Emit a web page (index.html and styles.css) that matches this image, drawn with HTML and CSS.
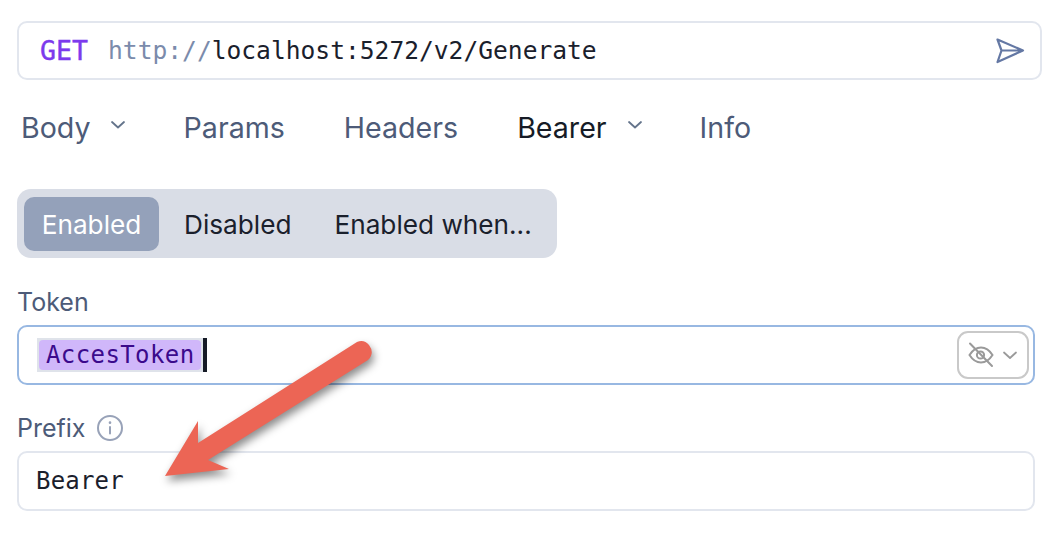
FILE: index.html

```html
<!DOCTYPE html>
<html lang="en">
<head>
    <meta charset="UTF-8">
    <title>Bearer auth</title>
    <link rel="stylesheet" href="styles.css">
</head>
<body>

    <div id="request">
        <div class="url-bar">
            <span class="method">GET</span>
            <span class="url"><span class="scheme">http://</span>localhost:5272/v2/Generate</span>
            <svg class="send-icon" width="30" height="30" viewBox="0 0 30 30" fill="none" stroke="#6478a4" stroke-width="2.2" stroke-linejoin="round" stroke-linecap="round">
                <path d="M2.5 3.5 L28 14.5 L2.5 26 L6.5 14.5 Z M6.5 14.5 H28"/>
            </svg>
        </div>

        <nav class="tabs">
            <span class="tab tab-body">Body
                <svg class="chev" width="18" height="18" viewBox="0 0 18 18" fill="none" stroke="#64748b" stroke-width="1.8" stroke-linecap="round" stroke-linejoin="round"><path d="M3 6 L9 11.5 L15 6"/></svg>
            </span>
            <span class="tab">Params</span>
            <span class="tab">Headers</span>
            <span class="tab tab-active">Bearer
                <svg class="chev" width="18" height="18" viewBox="0 0 18 18" fill="none" stroke="#64748b" stroke-width="1.8" stroke-linecap="round" stroke-linejoin="round"><path d="M3 6 L9 11.5 L15 6"/></svg>
            </span>
            <span class="tab">Info</span>
        </nav>

        <div class="segmented">
            <span class="seg seg-on">Enabled</span>
            <span class="seg">Disabled</span>
            <span class="seg">Enabled when...</span>
        </div>

        <div class="fields">
            <label class="field-label">Token</label>
            <div class="input input-focus">
                <span class="selection"><span class="var-chip">AccesToken</span></span><span class="caret"></span>
                <span class="visibility">
                    <svg width="28" height="28" viewBox="0 0 28 28" fill="none" stroke="#9a9a9a" stroke-width="2" stroke-linecap="round">
                        <path d="M2.5 14 C6 8.5 10 6.5 14 6.5 C18 6.5 22 8.5 25.5 14 C22 19.5 18 21.5 14 21.5 C10 21.5 6 19.5 2.5 14 Z"/>
                        <circle cx="13.5" cy="14" r="3.6"/>
                        <path d="M3 2.5 L25 25"/>
                    </svg>
                    <svg width="18" height="18" viewBox="0 0 18 18" fill="none" stroke="#9a9a9a" stroke-width="1.8" stroke-linecap="round" stroke-linejoin="round"><path d="M3 6.5 L9 12 L15 6.5"/></svg>
                </span>
            </div>

            <label class="field-label label-prefix">Prefix
                <svg width="28" height="28" viewBox="0 0 28 28" fill="none" stroke="#98a2b8" stroke-width="2" stroke-linecap="round">
                    <circle cx="14" cy="14" r="12"/>
                    <path d="M14 13 V19.5"/>
                    <path d="M14 8.6 V8.8" stroke-width="2.6"/>
                </svg>
            </label>
            <div class="input">
                <span class="value">Bearer</span>
            </div>
        </div>
    </div>

    <!-- annotation arrow on top of the screenshot -->
    <svg class="arrow" width="1064" height="540" viewBox="0 0 1064 540">
        <path class="arrow-shadow" d="M357 342 Q364 339 369 345 Q375 353 368 360 L208 460 L229 469 L165 476 L198 421 L198 443 Z"/>
        <path class="arrow-head" d="M357 342 Q364 339 369 345 Q375 353 368 360 L208 460 L229 469 L165 476 L198 421 L198 443 Z"/>
    </svg>

</body>
</html>
```

FILE: styles.css

```css
body {
    margin: 0;
    padding: 0;
    width: 1064px;
    height: 540px;
    overflow: hidden;
    background-color: #fff;
    font-family: 'Inter', sans-serif;
    color: #4d5b78;
    position: relative;
}

#request {
    padding: 21px 22px 0 17px;
}

.url-bar {
    display: flex;
    align-items: center;
    height: 59px;
    box-sizing: border-box;
    padding: 0 15px 0 21px;
    border: 2px solid #e2e6ee;
    border-radius: 10px;
    font-family: 'DejaVu Sans Mono', monospace;
    font-size: 24.6px;
}

.method {
    color: #7c3aed;
    font-size: 26.6px;
    -webkit-text-stroke: 0.4px #7c3aed;
    margin-right: 20px;
}

.url {
    flex: 1;
    color: #1a202c;
}

.scheme {
    color: #7b8bab;
}

.tabs {
    display: flex;
    align-items: center;
    margin-top: 28px;
    padding-left: 4px;
    font-size: 28.6px;
    line-height: 40px;
    gap: 59px;
}

.tab {
    display: flex;
    align-items: center;
}

.tab-active {
    color: #161b26;
}

.chev {
    margin-left: 18px;
    margin-right: -2px;
    margin-top: -6px;
}

.tab-active .chev {
    margin-left: 19px;
    margin-right: -3px;
}

.segmented {
    display: flex;
    margin-top: 41px;
    padding: 8px 7px 7px;
    height: 69px;
    width: 540px;
    box-sizing: border-box;
    background-color: #d9dde6;
    border-radius: 14px;
    font-size: 26.2px;
    color: #1a202c;
    white-space: nowrap;
}

.seg {
    display: flex;
    align-items: center;
    flex-shrink: 0;
    padding: 0 18px 0 25px;
}

.seg-on {
    background-color: #94a1ba;
    color: #fff;
    border-radius: 10px;
    width: 135px;
    box-sizing: border-box;
    justify-content: center;
    padding: 0;
}

.fields {
    width: 1018px;
}

.field-label {
    display: block;
    font-size: 25px;
    line-height: 30px;
    margin-top: 29px;
}

.label-prefix {
    display: flex;
    align-items: center;
    gap: 10px;
    margin-top: 28px;
}

.input {
    display: flex;
    align-items: center;
    height: 60px;
    box-sizing: border-box;
    margin-top: 8px;
    padding: 0 4px 0 17px;
    border: 2px solid #e2e6ee;
    border-radius: 10px;
    font-family: 'DejaVu Sans Mono', monospace;
    font-size: 24px;
    color: #1a202c;
}

.input-focus {
    border-color: #98b8e2;
}

.selection {
    display: flex;
    align-items: center;
    height: 34px;
    margin-left: 1px;
    padding: 2px;
    box-sizing: border-box;
    background-color: #dfe3ea;
}

.var-chip {
    display: flex;
    align-items: center;
    height: 30px;
    padding: 0 6px 0 7px;
    background-color: #d0b7fa;
    border-radius: 4px;
    color: #3b0a8c;
    letter-spacing: 0.4px;
}

.caret {
    width: 4px;
    height: 34px;
    background-color: #161b26;
}

.value {
    letter-spacing: 0.2px;
}

.visibility {
    display: flex;
    align-items: center;
    justify-content: center;
    gap: 6px;
    width: 72px;
    height: 48px;
    margin-left: auto;
    box-sizing: border-box;
    border: 2px solid #c9c9c9;
    border-radius: 11px;
}

.arrow {
    position: absolute;
    left: 0;
    top: 0;
}

.arrow-shadow {
    fill: rgba(0, 0, 0, 0.45);
    transform: translate(2px, 5px);
    filter: blur(4px);
}

.arrow-head {
    fill: #ec6555;
}
```
